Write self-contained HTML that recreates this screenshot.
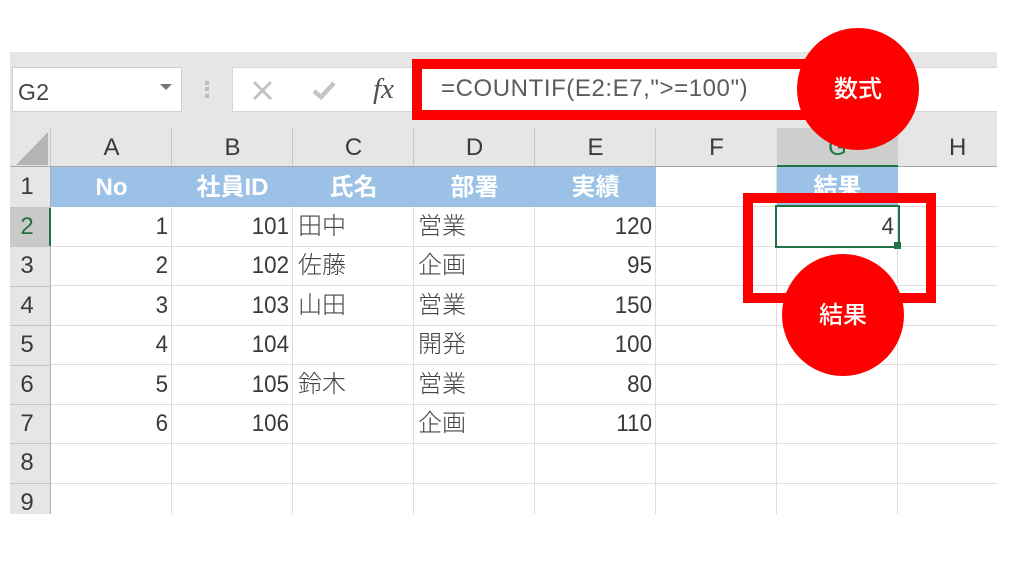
<!DOCTYPE html>
<html lang="ja"><head><meta charset="utf-8"><style>
html,body{margin:0;padding:0;background:#fff;width:1024px;height:562px;overflow:hidden}
body{position:relative;font-family:"Liberation Sans","Noto Sans CJK JP",sans-serif;color:#333}
div{position:absolute;box-sizing:border-box}
.t{white-space:nowrap;line-height:30px;height:30px;font-size:24px;color:#3a3a3a}
.o{margin-top:1px}
.n{margin-top:1px;transform:scaleX(.93);transform-origin:100% 50%}
.r{text-align:right}.c{text-align:center}
.j{font-size:24px;font-weight:300;margin-top:1px;color:#444}
.h{font-size:24px;font-weight:700;color:#fff;margin-top:2px}
.lv{background:#dedede;width:1px;top:207px;height:307px}
.lh{background:#dedede;height:1px;left:51px;width:946px}
.rl{background:#c4c4c4;height:1px;left:10px;width:41px}
.ch{background:#c8c8c8;width:1px;top:128px;height:39px}
</style></head><body>
<div style="left:10px;top:52px;width:987px;height:462px;background:#fff"></div>
<div style="left:10px;top:52px;width:987px;height:115px;background:#e6e6e6"></div>
<div style="left:10px;top:167px;width:41px;height:347px;background:#e6e6e6"></div>

<div style="left:12px;top:67px;width:170px;height:45px;background:#fff;border:1px solid #d0d0d0"></div>
<div class="t" style="left:18px;top:77px;font-size:23px;color:#444;letter-spacing:.3px">G2</div>
<div style="left:160px;top:84px;width:0;height:0;border-left:6.5px solid transparent;border-right:6.5px solid transparent;border-top:6px solid #777"></div>
<div style="left:205px;top:81px;width:4px;height:4px;background:#bdbdbd"></div>
<div style="left:205px;top:87px;width:4px;height:4px;background:#bdbdbd"></div>
<div style="left:205px;top:94px;width:4px;height:4px;background:#bdbdbd"></div>
<div style="left:232px;top:67px;width:765px;height:45px;background:#fff;border:1px solid #d6d6d6;border-right:0"></div>
<svg style="position:absolute;left:250px;top:78px" width="90" height="28" viewBox="0 0 90 28">
<path d="M4 4 L21 21 M21 4 L4 21" stroke="#c4c4c4" stroke-width="3" fill="none"/>
<path d="M64 13 L71 19 L84 5" stroke="#c4c4c4" stroke-width="4.5" fill="none"/>
</svg>
<div class="t" style="left:373px;top:74px;font-family:'Liberation Serif',serif;font-style:italic;font-size:29px;color:#4f4f4f">fx</div>

<div style="left:52px;top:128px;width:945px;height:39px;background:#e6e6e6"></div>
<svg style="position:absolute;left:14px;top:131px" width="36" height="36"><path d="M2 34 L34 1 V34 Z" fill="#b4b4b4"/></svg>
<div style="left:50px;top:128px;width:1px;height:39px;background:#c8c8c8"></div>
<div class="ch" style="left:171px"></div><div class="ch" style="left:292px"></div><div class="ch" style="left:413px"></div><div class="ch" style="left:534px"></div><div class="ch" style="left:655px"></div><div class="ch" style="left:897px"></div>
<div style="left:777px;top:128px;width:121px;height:39px;background:#cecece"></div>
<div style="left:10px;top:166px;width:987px;height:1px;background:#a8a8a8"></div>
<div style="left:777px;top:165px;width:121px;height:2px;background:#217346"></div>

<div class="t c o" style="left:51px;top:132px;width:121px">A</div>
<div class="t c o" style="left:172px;top:132px;width:121px">B</div>
<div class="t c o" style="left:293px;top:132px;width:121px">C</div>
<div class="t c o" style="left:414px;top:132px;width:121px">D</div>
<div class="t c o" style="left:535px;top:132px;width:121px">E</div>
<div class="t c o" style="left:656px;top:132px;width:121px">F</div>
<div class="t c o" style="left:777px;top:132px;width:121px;color:#217346">G</div>
<div class="t c o" style="left:898px;top:132px;width:99px;overflow:hidden"><span style="position:absolute;left:51px;top:0">H</span></div>

<div style="left:10px;top:207px;width:41px;height:40px;background:#c9c9c9"></div>
<div style="left:50px;top:167px;width:1px;height:347px;background:#b0b0b0"></div>
<div style="left:49px;top:207px;width:2px;height:40px;background:#217346"></div>
<div class="rl" style="top:207px"></div><div class="rl" style="top:246px"></div><div class="rl" style="top:286px"></div><div class="rl" style="top:325px"></div><div class="rl" style="top:365px"></div><div class="rl" style="top:404px"></div><div class="rl" style="top:443px"></div><div class="rl" style="top:483px"></div>

<div class="lh" style="top:206px"></div><div class="lh" style="top:246px"></div><div class="lh" style="top:285px"></div><div class="lh" style="top:325px"></div><div class="lh" style="top:364px"></div><div class="lh" style="top:404px"></div><div class="lh" style="top:443px"></div><div class="lh" style="top:483px"></div>
<div class="lv" style="left:171px"></div><div class="lv" style="left:292px"></div><div class="lv" style="left:413px"></div><div class="lv" style="left:534px"></div><div class="lv" style="left:655px"></div><div class="lv" style="left:776px;top:167px;height:347px"></div><div class="lv" style="left:897px;top:167px;height:347px"></div>

<div style="left:51px;top:167px;width:605px;height:40px;background:#9bc2e6"></div>
<div style="left:777px;top:167px;width:121px;height:40px;background:#9bc2e6"></div>

<div class="t c o" style="left:10px;top:171px;width:34px">1</div>
<div class="t c o" style="left:10px;top:211px;width:34px;color:#217346">2</div>
<div class="t c o" style="left:10px;top:250px;width:34px">3</div>
<div class="t c o" style="left:10px;top:290px;width:34px">4</div>
<div class="t c o" style="left:10px;top:329px;width:34px">5</div>
<div class="t c o" style="left:10px;top:369px;width:34px">6</div>
<div class="t c o" style="left:10px;top:408px;width:34px">7</div>
<div class="t c o" style="left:10px;top:447px;width:34px">8</div>
<div class="t c o" style="left:10px;top:487px;width:34px;height:26px;overflow:hidden">9</div>

<div class="t c h" style="left:51px;top:171px;width:121px">No</div>
<div class="t c h" style="left:172px;top:171px;width:121px">社員ID</div>
<div class="t c h" style="left:293px;top:171px;width:121px">氏名</div>
<div class="t c h" style="left:414px;top:171px;width:121px">部署</div>
<div class="t c h" style="left:535px;top:171px;width:121px">実績</div>
<div class="t c h" style="left:777px;top:171px;width:121px">結果</div>

<div class="t r n" style="left:51px;top:211px;width:117px">1</div><div class="t r n" style="left:172px;top:211px;width:117px">101</div><div class="t j" style="left:298px;top:211px">田中</div><div class="t j" style="left:418px;top:211px">営業</div><div class="t r n" style="left:535px;top:211px;width:117px">120</div>
<div class="t r n" style="left:51px;top:250px;width:117px">2</div><div class="t r n" style="left:172px;top:250px;width:117px">102</div><div class="t j" style="left:298px;top:250px">佐藤</div><div class="t j" style="left:418px;top:250px">企画</div><div class="t r n" style="left:535px;top:250px;width:117px">95</div>
<div class="t r n" style="left:51px;top:290px;width:117px">3</div><div class="t r n" style="left:172px;top:290px;width:117px">103</div><div class="t j" style="left:298px;top:290px">山田</div><div class="t j" style="left:418px;top:290px">営業</div><div class="t r n" style="left:535px;top:290px;width:117px">150</div>
<div class="t r n" style="left:51px;top:329px;width:117px">4</div><div class="t r n" style="left:172px;top:329px;width:117px">104</div><div class="t j" style="left:418px;top:329px">開発</div><div class="t r n" style="left:535px;top:329px;width:117px">100</div>
<div class="t r n" style="left:51px;top:369px;width:117px">5</div><div class="t r n" style="left:172px;top:369px;width:117px">105</div><div class="t j" style="left:298px;top:369px">鈴木</div><div class="t j" style="left:418px;top:369px">営業</div><div class="t r n" style="left:535px;top:369px;width:117px">80</div>
<div class="t r n" style="left:51px;top:408px;width:117px">6</div><div class="t r n" style="left:172px;top:408px;width:117px">106</div><div class="t j" style="left:418px;top:408px">企画</div><div class="t r n" style="left:535px;top:408px;width:117px">110</div>

<div style="left:775px;top:205px;width:125px;height:43px;border:2px solid #217346"></div>
<div style="left:894px;top:242px;width:7px;height:7px;background:#217346"></div>
<div class="t r n" style="left:777px;top:211px;width:117px">4</div>

<div class="t" style="left:441px;top:74px;font-size:24px;color:#5c5c5c;letter-spacing:.58px">=COUNTIF(E2:E7,"&gt;=100")</div>

<div style="left:412px;top:59px;width:410px;height:61px;border:10px solid #f00"></div>
<div style="left:743px;top:193px;width:193px;height:110px;border:10px solid #f00"></div>
<div style="left:797px;top:28px;width:122px;height:122px;border-radius:50%;background:#f00"></div>
<div style="left:782px;top:254px;width:122px;height:122px;border-radius:50%;background:#f00"></div>
<div class="t c" style="left:797px;top:75px;width:122px;font-size:24px;font-weight:500;color:#fff">数式</div>
<div class="t c" style="left:782px;top:301px;width:122px;font-size:24px;font-weight:500;color:#fff">結果</div>
</body></html>
